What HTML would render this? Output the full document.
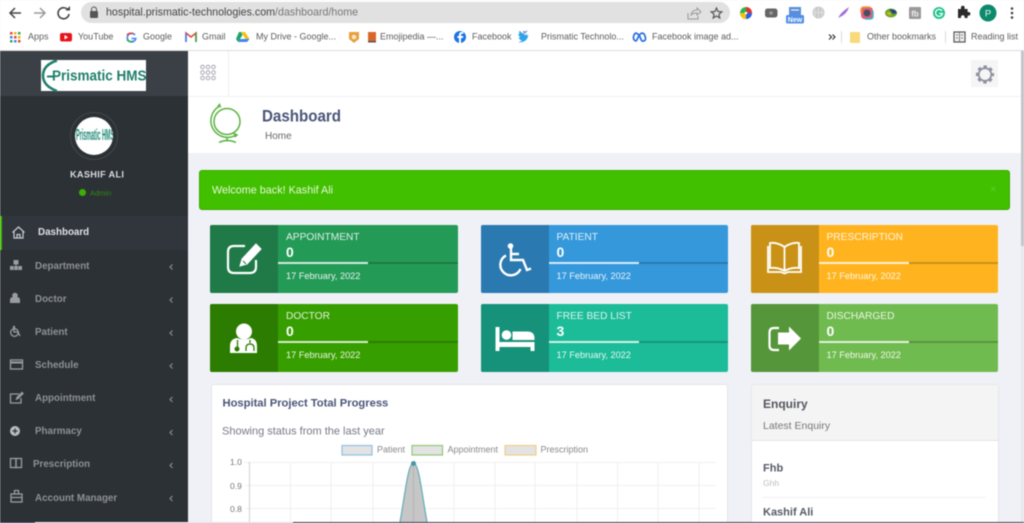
<!DOCTYPE html>
<html lang="en">
<head>
<meta charset="utf-8">
<title>Dashboard</title>
<style>
html,body{margin:0;padding:0;width:1024px;height:523px;overflow:hidden;background:#eff1f6}
#w{position:absolute;left:0;top:0;width:1024px;height:523px;overflow:hidden;font-family:"Liberation Sans",sans-serif;filter:blur(.45px)}
.b{position:absolute}
.t{position:absolute;white-space:nowrap;line-height:1;transform:translateY(-50%)}
.bm{font-size:9px;color:#5c5c5c}
.m{font-size:9.8px;font-weight:bold;color:#8d9195}
.card{position:absolute;width:248px;height:68px;border-radius:2px;overflow:hidden}
.card .ic{position:absolute;left:0;top:0;width:68px;height:68px}
.card .l{position:absolute;left:76px;top:7px;font-size:10.2px;line-height:12px;color:rgba(255,255,255,.85);white-space:nowrap}
.card .n{position:absolute;left:76px;top:19px;font-size:14px;line-height:16px;font-weight:bold;color:#fff}
.card .d{position:absolute;left:76px;top:44.5px;font-size:9.2px;line-height:12px;color:rgba(255,255,255,.9);white-space:nowrap}
.card .r1{position:absolute;left:68px;top:37px;width:90px;height:2px;background:rgba(255,255,255,.8)}
.card .r2{position:absolute;left:158px;top:37px;width:90px;height:2px;background:rgba(0,0,0,.2)}
.card svg{position:absolute;left:0;top:0}
</style>
</head>
<body>
<div id="w">
<!-- browser chrome -->
<div class="b" style="left:0;top:0;width:1024px;height:50px;background:#fff"></div>
<div class="b" style="left:0;top:50px;width:1024px;height:1px;background:#dcdcdc"></div>
<div class="b" style="left:81px;top:2px;width:649px;height:21px;border-radius:11px;background:#e1e1e1"></div>
<div class="t" style="left:106px;top:13px;font-size:10.68px;color:#444">hospital.prismatic-technologies.com<span style="color:#777">/dashboard/home</span></div>

<div class="t bm" style="left:28px;top:37px">Apps</div>
<div class="t bm" style="left:78px;top:37px">YouTube</div>
<div class="t bm" style="left:143px;top:37px">Google</div>
<div class="t bm" style="left:202px;top:37px">Gmail</div>
<div class="t bm" style="left:256px;top:37px">My Drive - Google...</div>
<div class="t bm" style="left:380px;top:37px">Emojipedia —...</div>
<div class="t bm" style="left:472px;top:37px">Facebook</div>
<div class="t bm" style="left:541px;top:37px">Prismatic Technolo...</div>
<div class="t bm" style="left:652px;top:37px">Facebook image ad...</div>
<div class="t bm" style="left:867px;top:37px">Other bookmarks</div>
<div class="t bm" style="left:971px;top:37px">Reading list</div>

<!-- sidebar -->
<div class="b" style="left:0;top:51px;width:188px;height:45px;background:#3a4046"></div>
<div class="b" style="left:0;top:96px;width:188px;height:427px;background:#2c3136"></div>
<div class="b" style="left:0;top:216px;width:188px;height:34px;background:#31363d"></div>
<div class="b" style="left:0;top:216px;width:2px;height:34px;background:#3fb800"></div>
<div class="b" style="left:41px;top:60px;width:105px;height:31px;background:#fff"></div>
<div class="t" style="left:52px;top:76px;font-size:15px;font-weight:bold;color:#1f7f6c;transform:translateY(-50%) scaleX(.9);transform-origin:0 50%">Prismatic HMS</div>
<div class="b" style="left:70px;top:112px;width:46px;height:46px;border:1px solid #43484d;border-radius:50%"></div>
<div class="b" style="left:75px;top:117px;width:38px;height:38px;background:#fff;border-radius:50%;overflow:hidden">
  <div class="t" style="left:1px;top:19px;font-size:16px;font-weight:bold;color:#1f8a76;transform:translateY(-50%) scaleX(.34);transform-origin:0 50%">Prismatic HMS</div>
</div>
<div class="t" style="left:70px;top:174.5px;font-size:9.2px;font-weight:bold;color:#d9dcdf;letter-spacing:.3px">KASHIF ALI</div>
<div class="b" style="left:79px;top:189px;width:7px;height:7px;border-radius:50%;background:#3cb000"></div>
<div class="t" style="left:90px;top:192.5px;font-size:7.5px;color:#2c8a12">Admin</div>

<div class="t m" style="left:38px;top:233px;color:#dfe2e6">Dashboard</div>
<div class="t m" style="left:35px;top:266.5px">Department</div>
<div class="t m" style="left:35px;top:299.5px">Doctor</div>
<div class="t m" style="left:35px;top:332.5px">Patient</div>
<div class="t m" style="left:35px;top:365.5px">Schedule</div>
<div class="t m" style="left:35px;top:399px">Appointment</div>
<div class="t m" style="left:35px;top:432px">Pharmacy</div>
<div class="t m" style="left:33px;top:465px">Prescription</div>
<div class="t m" style="left:35px;top:498.5px">Account Manager</div>

<!-- header -->
<div class="b" style="left:188px;top:51px;width:833px;height:45px;background:#fff"></div>
<div class="b" style="left:188px;top:96px;width:833px;height:1px;background:#f0f2f7"></div>
<div class="b" style="left:228px;top:51px;width:1px;height:45px;background:#eef0f5"></div>
<div class="b" style="left:971px;top:60px;width:27px;height:27px;background:#f5f5f5"></div>
<div class="b" style="left:188px;top:97px;width:833px;height:56px;background:#fff"></div>
<div class="t" style="left:262px;top:116px;font-size:17px;font-weight:bold;color:#4a5578;transform:translateY(-50%) scaleX(.89);transform-origin:0 50%">Dashboard</div>
<div class="t" style="left:265px;top:137px;font-size:10px;color:#666">Home</div>

<!-- alert -->
<div class="b" style="left:199px;top:170px;width:809px;height:38px;background:#41c000;border:1px solid #38a800;border-radius:3px"></div>
<div class="t" style="left:212px;top:191px;font-size:10.8px;color:#e6f7d8">Welcome back! Kashif Ali</div>
<div class="t" style="left:990px;top:190px;font-size:11px;color:#5fce2e">×</div>

<!-- cards -->
<div class="card" style="left:210px;top:225px;background:#249a57">
  <div class="ic" style="background:#1f7a48"></div><div class="r1"></div><div class="r2"></div>
  <svg width="68" height="68" fill="none" stroke="#fff"><path d="M35 21H24q-6 0-6 6v15q0 6 6 6h16q6 0 6-6V35" stroke-width="2.2"/><path d="M46 19l5 5-14 15-7 2 2-7z" fill="#fff" stroke-width="1"/><path d="M33 36l3 3" stroke="#1f7a48" stroke-width="1"/></svg>
  <div class="l">APPOINTMENT</div><div class="n">0</div><div class="d">17 February, 2022</div>
</div>
<div class="card" style="left:480.5px;top:225px;background:#3498db;width:247.5px">
  <div class="ic" style="background:#2a79b0"></div><div class="r1"></div><div class="r2"></div>
  <svg width="68" height="68" fill="none" stroke="#fff" stroke-width="2.4"><circle cx="29.500" cy="21" r="2.800" fill="#fff" stroke="none"/><path d="M30 23v12h12l4 10 4-1.500"/><path d="M30 29h8"/><path d="M25 30.500A10.500 10.500 0 1 0 39.500 44"/></svg>
  <div class="l">PATIENT</div><div class="n">0</div><div class="d">17 February, 2022</div>
</div>
<div class="card" style="left:750.5px;top:225px;background:#ffb41f;width:247.500px">
  <div class="ic" style="background:#c99216"></div><div class="r1"></div><div class="r2"></div>
  <svg width="68" height="68" fill="none" stroke="#fff" stroke-width="1.800"><path d="M33.500 22Q26 17 19 18V43Q27 42 33.500 46 40 42 48 43V18Q41 17 33.500 22ZM33.500 22V46"/><path d="M17 21V47H30L33.500 48.500 37 47H50V21"/></svg>
  <div class="l">PRESCRIPTION</div><div class="n">0</div><div class="d">17 February, 2022</div>
</div>
<div class="card" style="left:210px;top:304px;background:#379e00">
  <div class="ic" style="background:#2b7c00"></div><div class="r1"></div><div class="r2"></div>
  <svg width="68" height="68"><circle cx="34" cy="27.500" r="8" fill="#fff"/><path d="M20 49V42q0-7 7-8 7 3 14 0 6 1 6 8v7z" fill="#fff"/><circle cx="27" cy="45" r="2.500" fill="#2b7c00"/><path d="M27.500 36v7M40 36v3M36 47v-3q0-4 4-4t4 4v3" fill="none" stroke="#2b7c00" stroke-width="1.300"/></svg>
  <div class="l">DOCTOR</div><div class="n">0</div><div class="d">17 February, 2022</div>
</div>
<div class="card" style="left:480.5px;top:304px;background:#1cbc98;width:247.5px">
  <div class="ic" style="background:#17927a"></div><div class="r1"></div><div class="r2"></div>
  <svg width="68" height="68" fill="#fff"><rect x="14.500" y="23" width="4" height="24"/><rect x="49.500" y="38" width="4" height="9"/><rect x="14.500" y="38" width="39" height="5"/><circle cx="25.500" cy="31" r="4.800"/><path d="M31.500 27.500h15q7 0 7 7V36h-22z"/></svg>
  <div class="l">FREE BED LIST</div><div class="n">3</div><div class="d">17 February, 2022</div>
</div>
<div class="card" style="left:750.5px;top:304px;background:#70bb4f;width:247.5px">
  <div class="ic" style="background:#56963a"></div><div class="r1"></div><div class="r2"></div>
  <svg width="68" height="68"><path d="M28 24h-5q-4.500 0-4.500 4.500v13q0 4.500 4.500 4.500h5" fill="none" stroke="#fff" stroke-width="2.200"/><path d="M27 28.500h11v-6l12 12-12 12v-6H27z" fill="#fff"/></svg>
  <div class="l">DISCHARGED</div><div class="n">0</div><div class="d">17 February, 2022</div>
</div>

<!-- progress panel -->
<div class="b" style="left:211px;top:384px;width:515px;height:145px;background:#fff;border:1px solid #e4e6ea;border-radius:3px"></div>
<div class="t" style="left:222.500px;top:404px;font-size:11.200px;font-weight:bold;color:#4a5578">Hospital Project Total Progress</div>
<div class="t" style="left:222px;top:432px;font-size:11px;color:#777a85">Showing status from the last year</div>
<div class="t" style="left:377px;top:449.500px;font-size:9px;color:#888">Patient</div>
<div class="t" style="left:447.500px;top:449.500px;font-size:9px;color:#888">Appointment</div>
<div class="t" style="left:540.500px;top:449.500px;font-size:9px;color:#888">Prescription</div>
<div class="t" style="left:230px;top:462px;font-size:8.500px;color:#777">1.0</div>
<div class="t" style="left:230px;top:485.500px;font-size:8.500px;color:#777">0.9</div>
<div class="t" style="left:230px;top:508.500px;font-size:8.500px;color:#777">0.8</div>

<!-- enquiry panel -->
<div class="b" style="left:751px;top:384px;width:246px;height:145px;background:#fff;border:1px solid #e6e7ea;border-radius:3px"></div>
<div class="b" style="left:752px;top:385px;width:246px;height:55px;background:#f4f4f4;border-bottom:1px solid #e6e6e6"></div>
<div class="t" style="left:763px;top:404px;font-size:12px;font-weight:bold;color:#55575f">Enquiry</div>
<div class="t" style="left:763px;top:425.500px;font-size:10.500px;color:#777">Latest Enquiry</div>
<div class="t" style="left:763px;top:468.500px;font-size:11px;font-weight:bold;color:#555a66">Fhb</div>
<div class="t" style="left:763px;top:482.500px;font-size:8.500px;color:#bdbdbd">Ghh</div>
<div class="b" style="left:763px;top:497px;width:223px;height:1px;background:#f1f1f1"></div>
<div class="t" style="left:763px;top:513px;font-size:11px;font-weight:bold;color:#555a66">Kashif Ali</div>

<!-- scrollbar -->
<div class="b" style="left:1021px;top:51px;width:3px;height:472px;background:#e9e9ec"></div>
<div class="b" style="left:1021px;top:51px;width:3px;height:195px;background:#c4c4c8"></div>

<!-- icon and chart overlay -->
<svg class="b" style="left:0;top:0" width="1024" height="523" viewBox="0 0 1024 523">
  <!-- nav buttons -->
  <g fill="none" stroke="#444" stroke-width="1.500">
    <path d="M21 13H10M15 8l-5 5 5 5"/>
    <path d="M34 13h11M40 8l5 5-5 5" stroke="#9a9a9a"/>
    <path d="M68 10a5.500 5.500 0 1 0 1 4" stroke-width="1.600"/>
  </g>
  <path d="M65.500 10.500h4.500V6z" fill="#444"/>
  <rect x="90" y="11" width="8" height="7" rx="1" fill="#555"/>
  <path d="M91.500 11V9.500a2.500 2.500 0 0 1 5 0V11" fill="none" stroke="#555"/>
  <!-- omnibox right -->
  <path d="M688 13v6h10v-3M691 15q1-5 6-5V8l4 4-4 3v-2q-4 0-6 2z" fill="none" stroke="#9a9a9a"/>
  <path d="M716.500 8l1.500 3.500 3.800.3-2.900 2.500.9 3.700-3.300-2-3.300 2 .9-3.700-2.900-2.500 3.800-.3z" fill="none" stroke="#555" stroke-width="1.200"/>
  <!-- extensions -->
  <circle cx="746" cy="13" r="6" fill="#2db84d"/><path d="M746 13V7a6 6 0 0 1 6 6z" fill="#e8322f"/><path d="M746 13h6a6 6 0 0 1-6 6z" fill="#2a63e0"/><path d="M746 13v6a6 6 0 0 1-6-6z" fill="#f4c20d"/><circle cx="746" cy="13" r="1.300" fill="#fff"/>
  <rect x="765" y="8.500" width="12.500" height="9" rx="2.500" fill="#666"/><circle cx="771" cy="13" r="1.800" fill="#999"/>
  <rect x="789" y="7" width="12" height="8" fill="#5a8fd8"/><path d="M791 10h8" stroke="#fff"/><rect x="786" y="15" width="18" height="8.500" rx="1.500" fill="#4f8fe8"/>
  <text x="795" y="22" font-family="Liberation Sans,sans-serif" font-size="7" font-weight="bold" fill="#fff" text-anchor="middle">New</text>
  <circle cx="818.500" cy="12.500" r="6" fill="#c9c9c9"/><path d="M813 12.500h11M818.500 7v11M815 8.500v8M822 8.500v8" stroke="#e6e6e6" stroke-width=".7"/>
  <path d="M838 18q3-6 11-11-2 7-9 10z" fill="#a66fd8"/>
  <rect x="861" y="7" width="12" height="12" rx="3.500" fill="#e45a7a"/><path d="M861 13v-3q0-3 3-3h6" stroke="#f0a030" fill="none" stroke-width="1.500"/><path d="M873 11v5q0 3-3 3h-5" stroke="#30c0d8" fill="none" stroke-width="1.500"/><circle cx="867" cy="13" r="3.500" fill="#46505c"/>
  <ellipse cx="891" cy="13" rx="6" ry="4.500" fill="#6aa82a"/><path d="M889 9l6 1 2 3-4 1z" fill="#2a3f8a"/><path d="M886 13l4-1 1 4z" fill="#e8b820"/>
  <rect x="909" y="7" width="12" height="12" rx="1" fill="#9a9a9a"/><text x="915" y="16.500" font-family="Liberation Sans,sans-serif" font-size="8" font-weight="bold" fill="#eee" text-anchor="middle">fb</text>
  <circle cx="939" cy="13" r="6" fill="#1fc28a"/><path d="M942 11a3.500 3.500 0 1 0 .5 2.500H939" fill="none" stroke="#fff" stroke-width="1.200"/>
  <path d="M958 10h3v-1.500a1.800 1.800 0 0 1 3.600 0V10h3v3h1a1.800 1.800 0 0 1 0 3.600h-1v2.400h-3v-1a1.800 1.800 0 0 0-3.600 0v1h-3z" fill="#2a2a2a" transform="translate(0 -1)"/>
  <circle cx="988" cy="13" r="8.500" fill="#0c8a6c"/><text x="988" y="16.500" font-family="Liberation Sans,sans-serif" font-size="9.500" fill="#e8f5f0" text-anchor="middle">P</text>
  <g fill="#444"><circle cx="1012" cy="8.500" r="1.300"/><circle cx="1012" cy="13" r="1.300"/><circle cx="1012" cy="17.500" r="1.300"/></g>

  <!-- bookmarks icons -->
  <g><rect x="10" y="32" width="2.500" height="2.500" fill="#e8453c"/><rect x="14" y="32" width="2.500" height="2.500" fill="#f4b400"/><rect x="18" y="32" width="2.500" height="2.500" fill="#34a853"/><rect x="10" y="36" width="2.500" height="2.500" fill="#4285f4"/><rect x="14" y="36" width="2.500" height="2.500" fill="#e8453c"/><rect x="18" y="36" width="2.500" height="2.500" fill="#f4b400"/><rect x="10" y="40" width="2.500" height="2.500" fill="#34a853"/><rect x="14" y="40" width="2.500" height="2.500" fill="#4285f4"/><rect x="18" y="40" width="2.500" height="2.500" fill="#e8453c"/></g>
  <rect x="60" y="33" width="12" height="8.500" rx="2" fill="#e8141c"/><path d="M64.500 35v4.500l3.500-2.200z" fill="#fff"/>
  <path d="M135 35a4.300 4.300 0 1 0 .8 3.500H131.500" fill="none" stroke="#4285f4" stroke-width="1.600"/><path d="M127 35a4.300 4.300 0 0 1 6-1" fill="none" stroke="#e8453c" stroke-width="1.600"/><path d="M127 39.500a4.300 4.300 0 0 0 6 1.500" fill="none" stroke="#34a853" stroke-width="1.600"/>
  <path d="M186 42v-9l5 4 5-4v9" fill="none" stroke="#e8453c" stroke-width="1.600"/><path d="M186 42v-9" stroke="#4285f4" stroke-width="1.600"/><path d="M196 42v-9" stroke="#34a853" stroke-width="1.600"/>
  <path d="M241 32h4l4.500 7h-4z" fill="#f4c20d"/><path d="M241 32l-2 0-3 7 2 3 4.500-7z" fill="#1fa463"/><path d="M238 42h9l2.500-3h-9.500z" fill="#4285f4"/>
  <path d="M349 32h10v7l-5 4-5-4z" fill="#e8a040"/><circle cx="354" cy="37" r="2.300" fill="#f8e8c0"/>
  <rect x="368" y="32" width="8" height="10" fill="#d8682a"/><rect x="368" y="41" width="8" height="1.500" fill="#555"/>
  <circle cx="460" cy="37" r="6" fill="#1b74e4"/><path d="M461 43v-5h2l.3-2H461v-1.200q0-1 1.200-1h1.100v-1.800q-3.800-.6-4.300 2.300V36h-1.600v2H459v5z" fill="#fff"/>
  <path d="M524 35q2 0 4-1-1 1-1.500 1.600 1 .1 1.800-.6-.5 4-3.500 6-3.500 2-7 1 3 0 4-1.500-2.500-.5-3-3 .7 0 1.500-.4-2-1-2-3.500 1 .7 1.500.7-1.500-2 0-3.500 2 3 5 3-.3-3 3-3.200z" fill="#2ea5ea"/><circle cx="524" cy="32" r="1" fill="#e84a8a"/>
  <path d="M636 41q-3-1-2.500-4 1-5 3.500-3.500 3 2 4 6 1 2 2.500 1.500 3-.5 1.500-5-1.500-4-4-2.500-1.500 1-3 4-1.500 3.500-2 3.500z" fill="none" stroke="#2a70e0" stroke-width="1.700"/>
  <path d="M829 34.500l2.500 2.500-2.500 2.500M832.500 34.500l2.500 2.500-2.500 2.500" fill="none" stroke="#333" stroke-width="1.200"/>
  <rect x="841" y="31" width="1" height="12" fill="#ddd"/><rect x="945" y="31" width="1" height="12" fill="#ddd"/>
  <rect x="850" y="32" width="10" height="11" rx="1" fill="#f8d97c"/>
  <rect x="954" y="32" width="11" height="10" fill="#f0f0f0" stroke="#555" stroke-width="1.200"/><path d="M959.500 32v10M956 35h2M956 38h2M961 35h2M961 38h2" stroke="#555" stroke-width=".7"/>

  <!-- logo swoosh -->
  <path d="M57 60.500Q43 65 43 75.500T57 91" fill="none" stroke="#1f7f6c" stroke-width="2.500"/>
  <path d="M47 76.500h6" stroke="#1f7f6c" stroke-width="2"/>

  <!-- sidebar icons -->
  <g fill="none" stroke="#c8ccd0" stroke-width="1.200"><path d="M12.500 232.500l6-5.500 6 5.500M14 231v7h9v-7M17 238v-3.500h3V238"/></g>
  <g fill="#9a9da0">
    <rect x="13.500" y="260" width="5" height="4.500"/><rect x="10" y="266" width="3.700" height="4"/><rect x="14.200" y="266" width="3.700" height="4"/><rect x="18.300" y="266" width="3.700" height="4"/><rect x="15.500" y="264" width="1" height="2"/>
    <circle cx="15" cy="295.500" r="2.800"/><path d="M10 303v-3q0-2.800 2.500-2.800h5q2.500 0 2.500 2.800v3z"/>
  </g>
  <g fill="none" stroke="#9a9da0" stroke-width="1.300">
    <circle cx="14.500" cy="332.500" r="3.800"/><circle cx="14" cy="327" r=".6"/><path d="M14 328v4h4l2 4"/>
    <rect x="10.500" y="360" width="12" height="9"/><path d="M10.500 362.500h12" stroke-width="2"/>
    <path d="M19 394h-8.500v9h10.500v-5M22 392.500l-5 5-.5 1.500 1.500-.5 5-5z"/>
    <rect x="10.500" y="458.500" width="5.500" height="9"/><rect x="16" y="458.500" width="5.500" height="9"/>
    <rect x="11" y="494" width="11" height="8"/><path d="M14.500 494v-3.500h4V494M11 497.500h11"/>
  </g>
  <circle cx="15" cy="431" r="5" fill="#b8bbbe"/><path d="M12.500 431h5M15 428.500v5" stroke="#2c3136" stroke-width="1.200"/>
  <g fill="none" stroke="#8d9195" stroke-width="1.100">
    <path d="M172.500 264.500l-2.500 2.500 2.500 2.500M172.500 297.500l-2.500 2.500 2.500 2.500M172.500 330.500l-2.500 2.500 2.500 2.500M172.500 363.500l-2.500 2.500 2.500 2.500M172.500 397l-2.500 2.500 2.500 2.500M172.500 430l-2.500 2.500 2.500 2.500M172.500 463l-2.500 2.500 2.500 2.500M172.500 496l-2.500 2.500 2.500 2.500"/>
  </g>

  <!-- header icons -->
  <g fill="none" stroke="#a9a7b5" stroke-width="1">
    <circle cx="202.500" cy="67" r="1.800"/><circle cx="208" cy="67" r="1.800"/><circle cx="213.500" cy="67" r="1.800"/>
    <circle cx="202.500" cy="72.500" r="1.800"/><circle cx="208" cy="72.500" r="1.800"/><circle cx="213.500" cy="72.500" r="1.800"/>
    <circle cx="202.500" cy="78" r="1.800"/><circle cx="208" cy="78" r="1.800"/><circle cx="213.500" cy="78" r="1.800"/>
  </g>
  <circle cx="985" cy="74.500" r="6.300" fill="none" stroke="#8e90a0" stroke-width="1.800"/>
  <circle cx="985" cy="74.500" r="8" fill="none" stroke="#8e90a0" stroke-width="2.200" stroke-dasharray="3.400 2.880" stroke-dashoffset="1.700"/>
  <!-- globe -->
  <g fill="none" stroke="#5bb342" stroke-width="1.500">
    <circle cx="227" cy="121.500" r="13"/>
    <path d="M219 106.500A16.500 16.500 0 0 0 236 135"/>
    <path d="M227 137v4.500M219 142.500q8-4 17 0"/>
    <path d="M217.500 107l2-2.500 1 3"/>
    <path d="M233.500 133.500l3.500 1.500-2.500 2"/>
  </g>

  <!-- legend -->
  <rect x="342" y="445.500" width="30" height="9.500" fill="#e3e3e3" stroke="#90c2e5" stroke-width="1.200"/>
  <rect x="412" y="445.500" width="30.500" height="9.500" fill="#e3e3e3" stroke="#92c77a" stroke-width="1.200"/>
  <rect x="505" y="445.500" width="31" height="9.500" fill="#e3e3e3" stroke="#f5cd85" stroke-width="1.200"/>
  <!-- grid -->
  <g stroke="#f0f0f0" stroke-width="1">
    <path d="M245 462.500H716M245 485.500H716M245 508.500H716"/>
    <path d="M290.500 462v60M331 462v60M373 462v60M413.500 462v60M454 462v60M495 462v60M535 462v60M577 462v60M617.500 462v60M658 462v60M699 462v60"/>
  </g>
  <path d="M249.500 462v60" stroke="#d0d0d0" stroke-width="1"/>
  <!-- curve -->
  <path d="M400 522C405 495 408 463 413.500 463 419 463 422 495 427 522Z" fill="#c6c6c6"/>
  <path d="M413.500 463v59" stroke="#b4b4b4"/>
  <path d="M400 522C405 495 408 463 413.500 463 419 463 422 495 427 522" fill="none" stroke="#6aafb8" stroke-width="1.300"/>
  <circle cx="413.500" cy="463.500" r="2.500" fill="#4a98a4"/>
</svg>

<!-- bottom edge -->
<div class="b" style="left:293px;top:522px;width:731px;height:1px;background:#2d3f50"></div>
<div class="b" style="left:0;top:522px;width:35px;height:1px;background:#1e4a60"></div>
<div class="b" style="left:35px;top:522px;width:258px;height:1px;background:#dfe1e5"></div>
</div>
</body>
</html>
